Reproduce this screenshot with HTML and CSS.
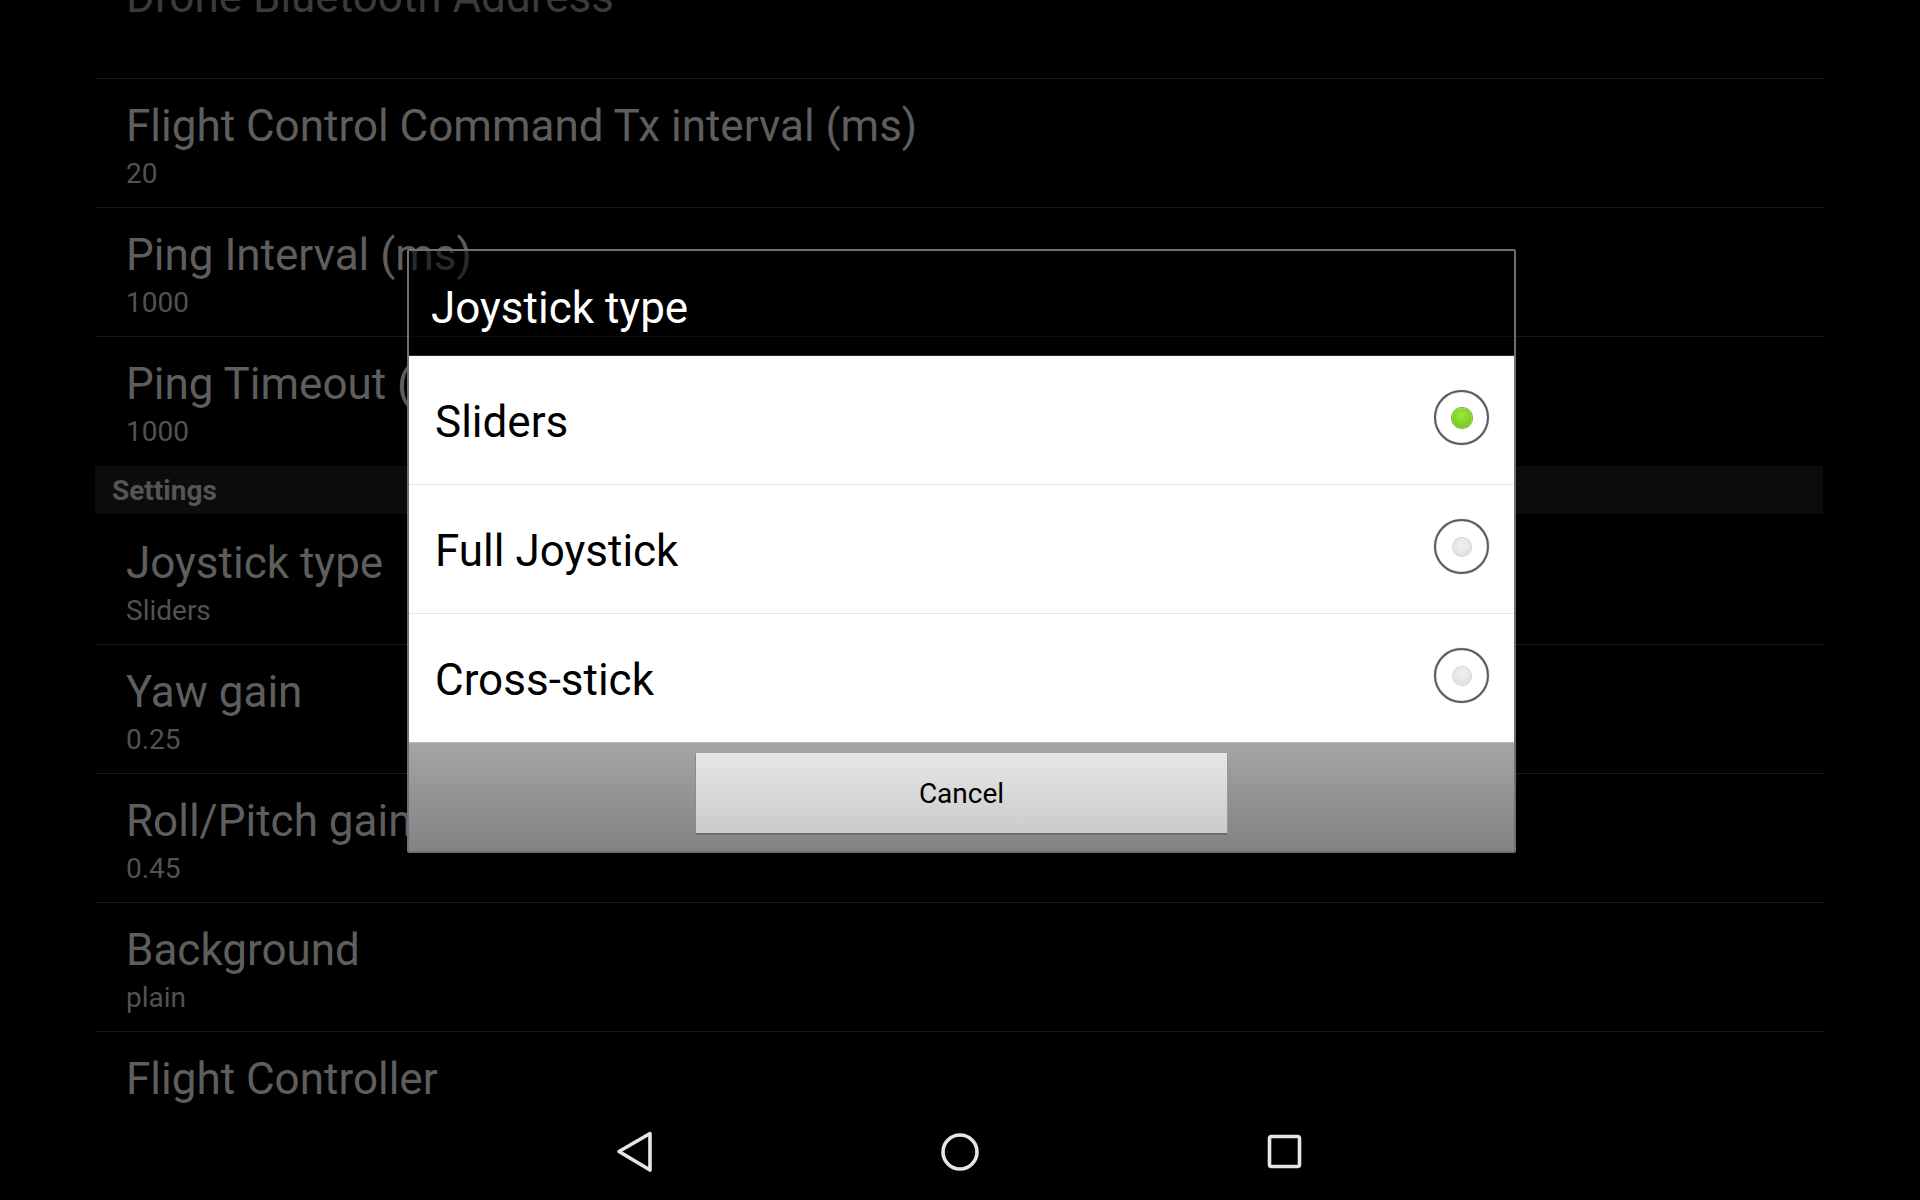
FILE: index.html
```html
<!DOCTYPE html>
<html>
<head>
<meta charset="utf-8">
<title>Settings</title>
<link rel="stylesheet" href="styles.css">
</head>
<body>
<div class="screen">
  <main class="prefs">
    <div class="list">
      <div class="row faded">
        <div class="title">Drone Bluetooth Address</div>
      </div>
      <div class="row">
        <div class="title">Flight Control Command Tx interval (ms)</div>
        <div class="summary">20</div>
      </div>
      <div class="row">
        <div class="title">Ping Interval (ms)</div>
        <div class="summary">1000</div>
      </div>
      <div class="row nodiv">
        <div class="title">Ping Timeout (ms)</div>
        <div class="summary">1000</div>
      </div>
      <div class="category">Settings</div>
      <div class="row">
        <div class="title">Joystick type</div>
        <div class="summary">Sliders</div>
      </div>
      <div class="row">
        <div class="title">Yaw gain</div>
        <div class="summary">0.25</div>
      </div>
      <div class="row">
        <div class="title">Roll/Pitch gain</div>
        <div class="summary">0.45</div>
      </div>
      <div class="row">
        <div class="title">Background</div>
        <div class="summary">plain</div>
      </div>
      <div class="row last">
        <div class="title">Flight Controller</div>
      </div>
    </div>
  </main>
  <nav class="navbar">
    <svg class="navicon" width="60" height="60" viewBox="0 0 60 60">
      <path d="M45 11.5 L14 29.5 L45 48 Z" fill="none" stroke="#e6e6e6" stroke-width="3.6" stroke-linejoin="round"/>
    </svg>
    <svg class="navicon" width="60" height="60" viewBox="0 0 60 60">
      <circle cx="30" cy="30" r="17" fill="none" stroke="#e6e6e6" stroke-width="3.6"/>
    </svg>
    <svg class="navicon" width="60" height="60" viewBox="0 0 60 60">
      <rect x="14.5" y="14.5" width="30" height="30" rx="2" fill="none" stroke="#e6e6e6" stroke-width="3.6"/>
    </svg>
  </nav>
</div>

<div class="dialog">
  <div class="dlg-title">Joystick type</div>
  <div class="dlg-list">
    <div class="choice">
      <span class="choice-label">Sliders</span>
      <span class="radio checked"><span class="dot"></span></span>
    </div>
    <div class="choice">
      <span class="choice-label">Full Joystick</span>
      <span class="radio"><span class="dot"></span></span>
    </div>
    <div class="choice last">
      <span class="choice-label">Cross-stick</span>
      <span class="radio"><span class="dot"></span></span>
    </div>
  </div>
  <div class="dlg-footer">
    <div class="btn">Cancel</div>
  </div>
</div>
</body>
</html>
```

FILE: styles.css
```css
html, body {
  margin: 0;
  padding: 0;
  background: #000;
}

body {
  width: 1920px;
  height: 1200px;
  overflow: hidden;
  position: relative;
  font-family: Roboto, "Noto Sans", "Liberation Sans", sans-serif;
}

.screen {
  height: 1200px;
  display: flex;
  flex-direction: column;
}

.prefs {
  height: 1104px;
  overflow: hidden;
  padding: 0 97px 0 95px;
  flex: none;
}

.list {
  margin-top: -50px;
}

.row {
  box-sizing: border-box;
  height: 129px;
  border-bottom: 1px solid #1a1a1a;
  padding: 21px 0 0 31px;
}

.row.nodiv {
  border-bottom-color: transparent;
}

.row.last {
  border-bottom: none;
  height: 72px;
}

.title {
  font-size: 44px;
  line-height: 52px;
  color: #5e5e5e;
  white-space: nowrap;
}

.row.faded .title {
  color: #3b3b3b;
}

.summary {
  margin-top: 5px;
  font-size: 28px;
  line-height: 34px;
  color: #525252;
}

.category {
  box-sizing: border-box;
  height: 48px;
  margin-bottom: 2px;
  background: #0c0c0c;
  padding: 1px 0 0 17px;
  font-size: 28px;
  line-height: 48px;
  font-weight: 700;
  color: #555;
}

.navbar {
  height: 96px;
  flex: none;
  display: flex;
  justify-content: center;
  align-items: center;
  gap: 265px;
}

.navicon {
  display: block;
}

/* Dialog (overlays the list) */
.dialog {
  position: absolute;
  left: 407px;
  top: 249px;
  width: 1109px;
  box-sizing: border-box;
  border: 2px solid #6f6f6f;
  border-radius: 2px;
}

.dlg-title {
  box-sizing: border-box;
  height: 105px;
  padding: 31px 0 0 22px;
  background: rgba(0, 0, 0, 0.55);
  box-shadow: inset 0 -1px 0 #2a2a2a;
  color: #fff;
  font-size: 44px;
  line-height: 52px;
}

.dlg-list {
  background: #fff;
}

.choice {
  box-sizing: border-box;
  height: 129px;
  border-bottom: 1px solid #e6e6e6;
  display: flex;
  align-items: center;
  justify-content: space-between;
  padding: 0 25px 0 26px;
}

.choice.last {
  height: 128px;
  border-bottom: none;
}

.choice-label {
  font-size: 44px;
  line-height: 52px;
  color: #000;
  padding-top: 4px;
}

.radio {
  box-sizing: border-box;
  width: 55px;
  height: 55px;
  border-radius: 50%;
  border: 2px solid #5a5a5a;
  display: flex;
  align-items: center;
  justify-content: center;
  margin-top: -5px;
  box-shadow: 0 0 1px rgba(0,0,0,0.5), inset 0 0 1px rgba(0,0,0,0.4);
}

.radio .dot {
  width: 18px;
  height: 18px;
  border-radius: 50%;
  background: radial-gradient(circle at 50% 40%, #f2f2f2 0%, #e4e4e4 60%, #d2d2d2 100%);
  box-shadow: 0 0 0 1px #d0d0d0;
}

.radio.checked .dot {
  width: 20px;
  height: 20px;
  background: radial-gradient(circle at 50% 35%, #9ee443 0%, #82d324 55%, #6cbc18 100%);
  box-shadow: 0 0 0 1px #7cba3a;
}

.dlg-footer {
  box-sizing: border-box;
  height: 109px;
  border-top: 1px solid #b8b8b8;
  background: linear-gradient(#a5a5a5, #828282);
  display: flex;
  justify-content: center;
  padding-top: 10px;
}

.btn {
  box-sizing: border-box;
  width: 533px;
  height: 82px;
  background: linear-gradient(#e6e6e6, #cbcbcb);
  border-top: 1px solid #ececec;
  border-left: 1px solid #8c8c8c;
  border-right: 1px solid #9a9a9a;
  border-bottom: 2px solid #6c6c6c;
  border-radius: 2px;
  display: flex;
  align-items: center;
  justify-content: center;
  font-size: 28px;
  color: #000;
}
```
